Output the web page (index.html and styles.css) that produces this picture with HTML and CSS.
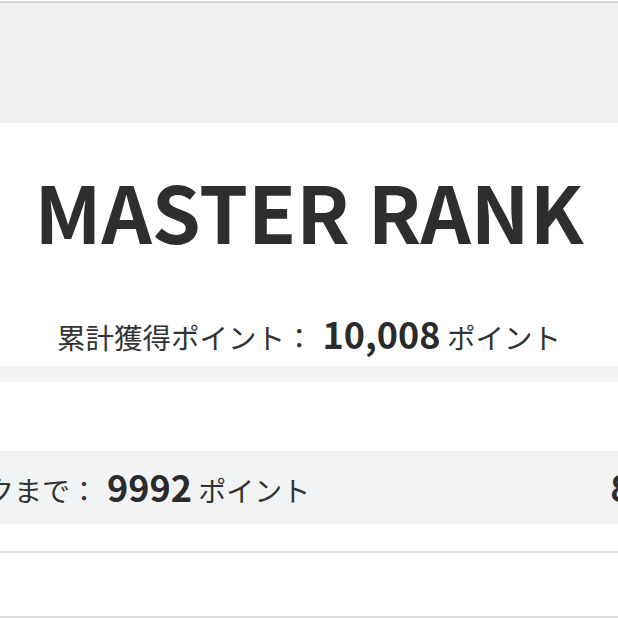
FILE: index.html
```html
<!DOCTYPE html>
<html lang="ja">
<head>
<meta charset="utf-8">
<link rel="stylesheet" href="styles.css">
</head>
<body>
  <div class="page">
    <header class="banner"></header>
    <section class="rank-card">
      <h1 class="rank-title">MASTER RANK</h1>
      <p class="total">累計獲得ポイント<span class="colon">：</span><span class="num">10,008</span> ポイント</p>
      <div class="progress"></div>
    </section>
    <section class="next-row">
      <div class="next-track">
        <p class="next-item first">次のランクまで<span class="colon">：</span><span class="num">9992</span> ポイント</p>
        <p class="next-item second"><span class="num">8,000</span> ポイント</p>
      </div>
    </section>
    <div class="divider"></div>
    <div class="blank"></div>
    <div class="divider"></div>
  </div>
</body>
</html>
```

FILE: styles.css
```css
html, body {
  margin: 0;
  padding: 0;
  background: #ffffff;
  overflow: hidden;
}

.page {
  padding-top: 1px;
  font-family: "Noto Sans CJK JP", "Noto Sans", sans-serif;
  color: #333333;
}

.banner {
  border-top: 2px solid #d9d7d3;
  height: 120px;
  background: #f1f0ee;
}

.rank-card {
  padding-top: 47px;
  text-align: center;
}

.rank-title {
  margin: 0;
  font-size: 78.5px;
  line-height: 80px;
  font-weight: 700;
  color: #2e2e2e;
}

.total {
  margin: 0;
  padding-top: 63px;
  font-size: 28.5px;
  line-height: 40px;
  white-space: nowrap;
}

.colon {
  display: inline-block;
  width: 1em;
  text-align: center;
}

.num {
  margin-left: 9px;
  font-size: 36px;
  font-weight: 700;
  color: #2b2b2b;
}

.progress {
  margin-top: 9px;
  height: 16px;
  background: #f1f3f4;
}

.next-row {
  margin-top: 69px;
  height: 73px;
  background: #f1f3f4;
  overflow: hidden;
}

.next-track {
  display: flex;
  align-items: center;
  height: 100%;
  gap: 300px;
}

.next-item {
  margin: 0;
  flex-shrink: 0;
  font-size: 28px;
  line-height: 40px;
  white-space: nowrap;
}

.next-item.first {
  margin-left: -126px;
}

.next-item.second .num {
  margin-left: 0;
}

.divider {
  height: 2px;
  background: #dcdcdc;
}

.next-row + .divider {
  margin-top: 27px;
}

.blank {
  height: 63px;
}
```
